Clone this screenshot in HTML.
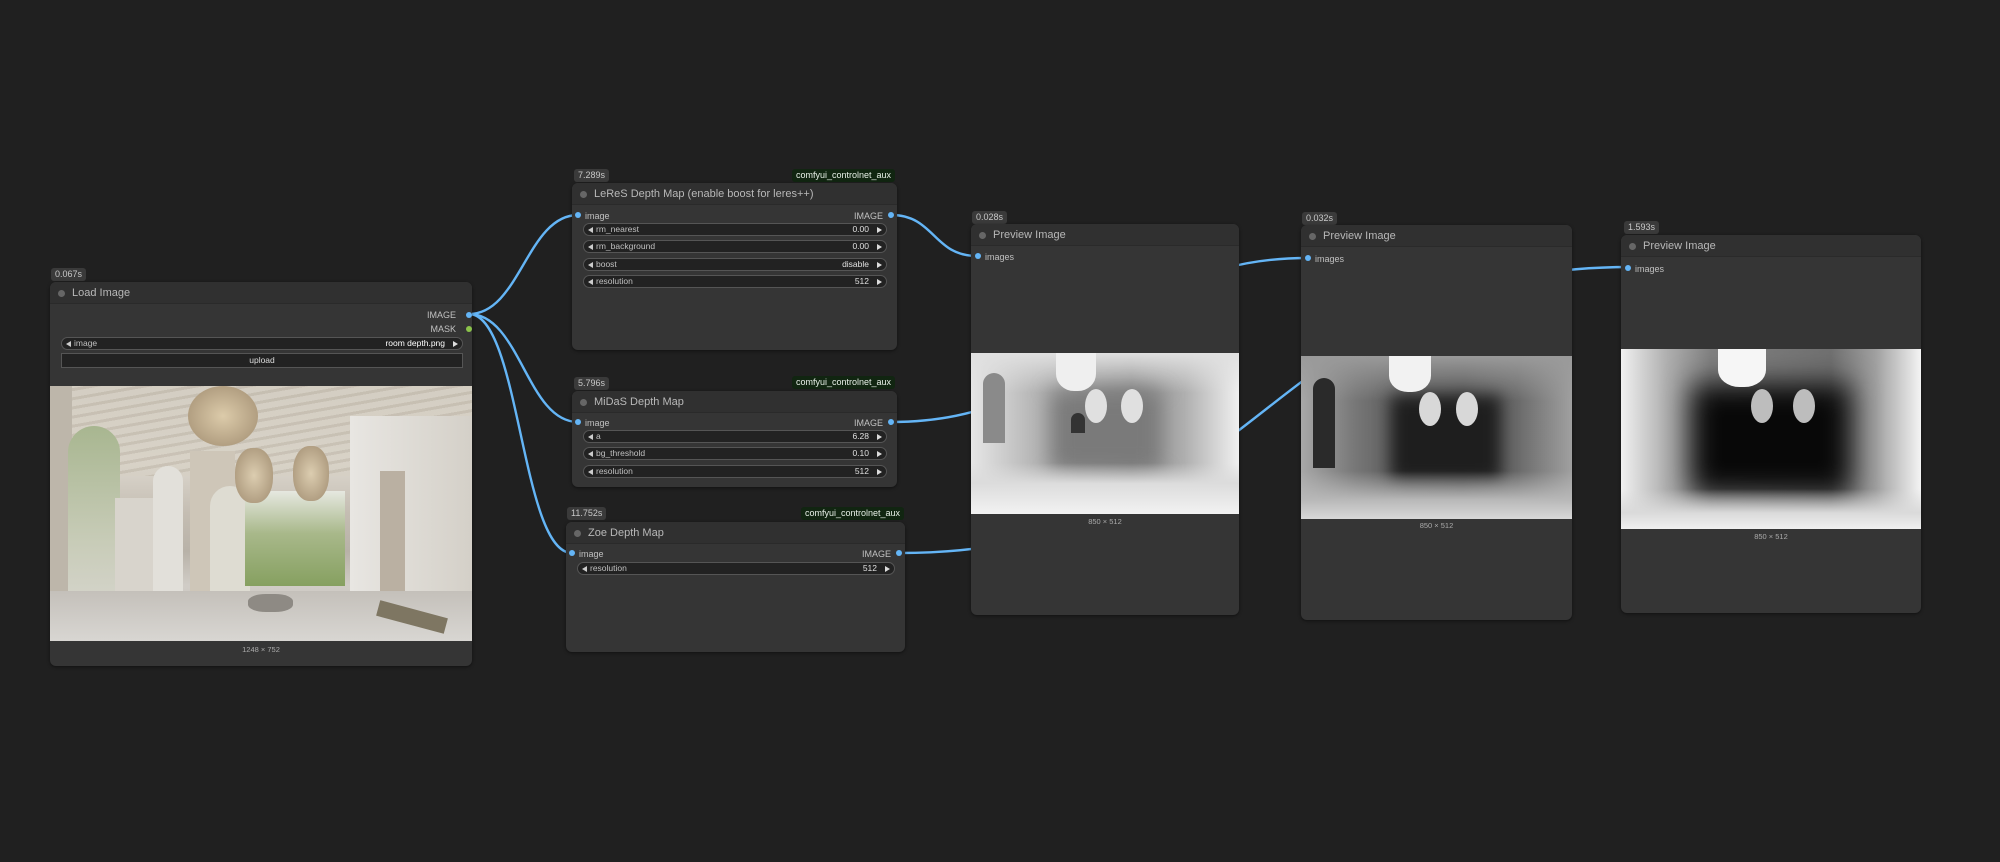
<!DOCTYPE html>
<html><head><meta charset="utf-8"><style>
*{margin:0;padding:0;box-sizing:border-box}
body{width:2000px;height:862px;background:#202020;position:relative;overflow:hidden;font-family:"Liberation Sans",sans-serif;color:#b0b0b0}
.n{position:absolute;background:#353535;border-radius:6px;box-shadow:0 1px 3px rgba(0,0,0,.5)}
.t{position:absolute;left:0;right:0;top:0;height:22px;background:#303030;border-radius:6px 6px 0 0;border-bottom:1px solid #2a2a2a;font-size:11px;line-height:22px;padding-left:22px;color:#b8b8b8}
.t:before{content:"";position:absolute;left:8px;top:8px;width:7px;height:7px;border-radius:50%;background:#666}
.b{position:absolute;height:13px;padding:0 4px;background:#3a3a3a;border-radius:3px;font-size:9px;line-height:13px;color:#c8c8c8}
.tag{position:absolute;height:13px;padding:0 4px;background:#112511;border-radius:3px;font-size:9px;line-height:13px;color:#e8f0e8}
.s{position:absolute;font-size:9px;color:#c0c0c0;line-height:10px}
.d{position:absolute;width:6px;height:6px;border-radius:50%;background:#64b5f6}
.w{position:absolute;height:13px;background:#222;border:1px solid #555;border-radius:7px;font-size:8.5px;line-height:11px;color:#c0c0c0}
.w .l{position:absolute;left:12px}.w .v{position:absolute;right:17px;color:#e0e0e0}
.w:before{content:"";position:absolute;left:4px;top:3px;border:3px solid transparent;border-right:5px solid #ccc;border-left:0}
.w:after{content:"";position:absolute;right:4px;top:3px;border:3px solid transparent;border-left:5px solid #ddd;border-right:0}
.cap{position:absolute;font-size:7.5px;color:#aaa;text-align:center}
.img{position:absolute;overflow:hidden}
.img div{position:absolute}
</style></head><body>
<svg width="2000" height="862" style="position:absolute;left:0;top:0">
<g fill="none" stroke="#64b5f6" stroke-width="2.4">
<path d="M469 314 C520 314 527 215 578 215"/>
<path d="M469 314 C520 314 527 422 578 422"/>
<path d="M469 314 C520 314 521 553 572 553"/>
<path d="M891 215 C935 215 933 256 977 256"/>
<path d="M891 422 C1100 422 1098 258 1307 258"/>
<path d="M900 553 C1265 553 1265 267 1630 267"/>
</g></svg>

<!-- Load Image -->
<div class="b" style="left:51px;top:268px">0.067s</div>
<div class="n" style="left:50px;top:282px;width:422px;height:384px">
<div class="t">Load Image</div>
<div class="s" style="right:16px;top:28px">IMAGE</div><div class="d" style="right:0px;top:30px"></div>
<div class="s" style="right:16px;top:42px">MASK</div><div class="d" style="right:0px;top:44px;background:#8bc34a"></div>
<div class="w" style="left:11px;top:55px;width:402px"><span class="l">image</span><span class="v" style="color:#fff">room depth.png</span></div>
<div style="position:absolute;left:11px;top:71px;width:402px;height:15px;background:#222;border:1px solid #555;font-size:8.5px;line-height:13px;text-align:center;color:#ddd">upload</div>
<div class="img" style="left:0;top:104px;width:422px;height:255px;background:linear-gradient(180deg,#cfc9bf 0%,#dcd7ce 30%,#c4bdb2 50%,#b8b2a8 65%,#d0ccc6 78%,#c8c4be 100%)">
<div style="left:0;top:0;width:422px;height:90px;background:repeating-linear-gradient(170deg,#d6d0c4 0 6px,#c2baac 6px 9px);opacity:.7"></div>
<div style="left:0;top:0;width:22px;height:255px;background:#bdb6aa"></div>
<div style="left:18px;top:40px;width:52px;height:195px;border-radius:26px 26px 0 0;background:linear-gradient(180deg,#a8b690,#c8ccb8 60%,#d8d6d0)"></div>
<div style="left:65px;top:112px;width:38px;height:130px;background:#d8d4cc"></div>
<div style="left:103px;top:80px;width:30px;height:140px;border-radius:15px 15px 0 0;background:#e2e0da"></div>
<div style="left:140px;top:65px;width:45px;height:160px;background:#cec6b8"></div>
<div style="left:160px;top:100px;width:40px;height:115px;border-radius:20px 20px 0 0;background:#dedcd2"></div>
<div style="left:195px;top:105px;width:100px;height:95px;background:linear-gradient(180deg,#e6e8e0,#a8b88a 45%,#86a060)"></div>
<div style="left:138px;top:0px;width:70px;height:60px;border-radius:50%;background:radial-gradient(#dccbaa,#a08c70)"></div>
<div style="left:185px;top:62px;width:38px;height:55px;border-radius:45%;background:radial-gradient(#dccdb0,#a08c70)"></div>
<div style="left:243px;top:60px;width:36px;height:55px;border-radius:45%;background:radial-gradient(#dccdb0,#a08c70)"></div>
<div style="left:300px;top:30px;width:122px;height:210px;background:linear-gradient(90deg,#e8e6e2,#d4d0c8)"></div>
<div style="left:330px;top:85px;width:25px;height:120px;background:#bab0a2"></div>
<div style="left:0;top:205px;width:422px;height:50px;background:linear-gradient(180deg,#c4c0ba,#d8d6d2)"></div>
<div style="left:198px;top:208px;width:45px;height:18px;border-radius:40%;background:#8e8a84"></div>
<div style="left:327px;top:223px;width:70px;height:16px;background:#7e7662;transform:rotate(15deg)"></div>
</div>
<div class="cap" style="left:0;right:0;top:363px">1248 × 752</div>
</div>

<!-- LeReS -->
<div class="b" style="left:574px;top:169px">7.289s</div>
<div class="tag" style="left:792px;top:169px">comfyui_controlnet_aux</div>
<div class="n" style="left:572px;top:183px;width:325px;height:167px">
<div class="t">LeReS Depth Map (enable boost for leres++)</div>
<div class="d" style="left:3px;top:29px"></div><div class="s" style="left:13px;top:28px">image</div>
<div class="s" style="right:14px;top:28px">IMAGE</div><div class="d" style="right:3px;top:29px"></div>
<div class="w" style="left:11px;top:40px;width:304px"><span class="l">rm_nearest</span><span class="v">0.00</span></div>
<div class="w" style="left:11px;top:57px;width:304px"><span class="l">rm_background</span><span class="v">0.00</span></div>
<div class="w" style="left:11px;top:75px;width:304px"><span class="l">boost</span><span class="v">disable</span></div>
<div class="w" style="left:11px;top:92px;width:304px"><span class="l">resolution</span><span class="v">512</span></div>
</div>

<!-- MiDaS -->
<div class="b" style="left:574px;top:377px">5.796s</div>
<div class="tag" style="left:792px;top:376px">comfyui_controlnet_aux</div>
<div class="n" style="left:572px;top:391px;width:325px;height:96px">
<div class="t">MiDaS Depth Map</div>
<div class="d" style="left:3px;top:28px"></div><div class="s" style="left:13px;top:27px">image</div>
<div class="s" style="right:14px;top:27px">IMAGE</div><div class="d" style="right:3px;top:28px"></div>
<div class="w" style="left:11px;top:39px;width:304px"><span class="l">a</span><span class="v">6.28</span></div>
<div class="w" style="left:11px;top:56px;width:304px"><span class="l">bg_threshold</span><span class="v">0.10</span></div>
<div class="w" style="left:11px;top:74px;width:304px"><span class="l">resolution</span><span class="v">512</span></div>
</div>

<!-- Zoe -->
<div class="b" style="left:567px;top:507px">11.752s</div>
<div class="tag" style="left:801px;top:507px">comfyui_controlnet_aux</div>
<div class="n" style="left:566px;top:522px;width:339px;height:130px">
<div class="t">Zoe Depth Map</div>
<div class="d" style="left:3px;top:28px"></div><div class="s" style="left:13px;top:27px">image</div>
<div class="s" style="right:14px;top:27px">IMAGE</div><div class="d" style="right:3px;top:28px"></div>
<div class="w" style="left:11px;top:40px;width:318px"><span class="l">resolution</span><span class="v">512</span></div>
</div>

<!-- Preview 1 -->
<div class="b" style="left:972px;top:211px">0.028s</div>
<div class="n" style="left:971px;top:224px;width:268px;height:391px">
<div class="t">Preview Image</div>
<div class="d" style="left:4px;top:29px"></div><div class="s" style="left:14px;top:28px">images</div>
<div class="img" style="left:0;top:129px;width:268px;height:161px;background:linear-gradient(90deg,#e6e6e6,#bdbdbd 20%,#9a9a9a 40%,#8c8c8c 60%,#b0b0b0 80%,#f0f0f0)">
<div style="left:0;top:0;width:268px;height:40px;background:linear-gradient(180deg,#e0e0e0,rgba(200,200,200,0))"></div>
<div style="left:80px;top:38px;width:110px;height:80px;background:#7a7a7a;filter:blur(10px)"></div>
<div style="left:0;top:110px;width:268px;height:51px;background:linear-gradient(180deg,rgba(200,200,200,0),#dcdcdc 40%,#f2f2f2)"></div>
<div style="left:85px;top:0;width:40px;height:38px;border-radius:0 0 45% 45%;background:#efefef"></div>
<div style="left:114px;top:36px;width:22px;height:34px;border-radius:50%;background:#e0e0e0"></div>
<div style="left:150px;top:36px;width:22px;height:34px;border-radius:50%;background:#e0e0e0"></div>
<div style="left:12px;top:20px;width:22px;height:70px;border-radius:11px 11px 0 0;background:#8a8a8a"></div>
<div style="left:100px;top:60px;width:14px;height:20px;border-radius:7px 7px 0 0;background:#333"></div>
</div>
<div class="cap" style="left:0;right:0;top:293px">850 × 512</div>
</div>

<!-- Preview 2 -->
<div class="b" style="left:1302px;top:212px">0.032s</div>
<div class="n" style="left:1301px;top:225px;width:271px;height:395px">
<div class="t">Preview Image</div>
<div class="d" style="left:4px;top:30px"></div><div class="s" style="left:14px;top:29px">images</div>
<div class="img" style="left:0;top:131px;width:271px;height:163px;background:linear-gradient(90deg,#a8a8a8,#777 20%,#555 40%,#505050 60%,#6a6a6a 80%,#a0a0a0)">
<div style="left:0;top:0;width:271px;height:45px;background:linear-gradient(180deg,#9a9a9a,rgba(120,120,120,0))"></div>
<div style="left:90px;top:40px;width:110px;height:85px;background:#1e1e1e;filter:blur(8px)"></div>
<div style="left:0;top:115px;width:271px;height:48px;background:linear-gradient(180deg,rgba(150,150,150,0),#b8b8b8 60%,#d8d8d8)"></div>
<div style="left:88px;top:0;width:42px;height:36px;border-radius:0 0 45% 45%;background:#f2f2f2"></div>
<div style="left:118px;top:36px;width:22px;height:34px;border-radius:50%;background:#d8d8d8"></div>
<div style="left:155px;top:36px;width:22px;height:34px;border-radius:50%;background:#d8d8d8"></div>
<div style="left:12px;top:22px;width:22px;height:90px;border-radius:11px 11px 0 0;background:#2a2a2a"></div>
</div>
<div class="cap" style="left:0;right:0;top:296px">850 × 512</div>
</div>

<!-- Preview 3 -->
<div class="b" style="left:1624px;top:221px">1.593s</div>
<div class="n" style="left:1621px;top:235px;width:300px;height:378px">
<div class="t">Preview Image</div>
<div class="d" style="left:4px;top:30px"></div><div class="s" style="left:14px;top:29px">images</div>
<div class="img" style="left:0;top:114px;width:300px;height:180px;background:linear-gradient(90deg,#f0f0f0,#b0b0b0 15%,#808080 30%,#707070 70%,#a0a0a0 85%,#f4f4f4)">
<div style="left:70px;top:35px;width:160px;height:110px;background:#080808;filter:blur(14px)"></div>
<div style="left:0;top:140px;width:300px;height:40px;background:linear-gradient(180deg,rgba(200,200,200,0),#dadada 60%,#f0f0f0)"></div>
<div style="left:97px;top:0;width:48px;height:38px;border-radius:0 0 45% 45%;background:#f6f6f6"></div>
<div style="left:130px;top:40px;width:22px;height:34px;border-radius:50%;background:#bdbdbd"></div>
<div style="left:172px;top:40px;width:22px;height:34px;border-radius:50%;background:#bdbdbd"></div>
</div>
<div class="cap" style="left:0;right:0;top:297px">850 × 512</div>
</div>
</body></html>
